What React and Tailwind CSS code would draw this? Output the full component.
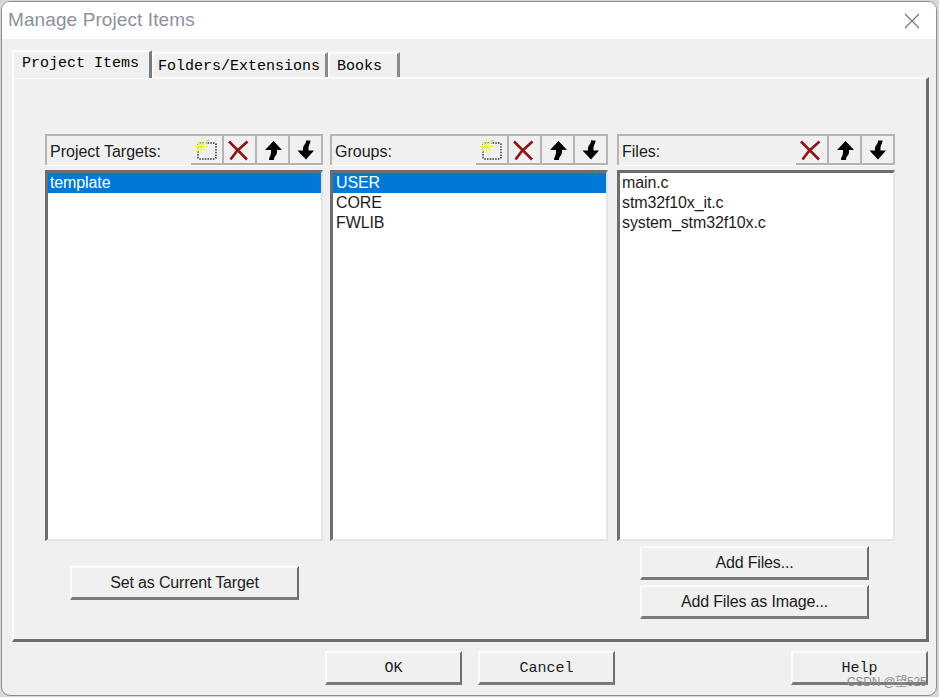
import React from 'react'

const sans = 'font-["Liberation_Sans",Arial,"Noto_Sans_CJK_SC",sans-serif]'
const mono = 'font-["Liberation_Mono","Courier_New",monospace]'

function NewIcon() {
  return (
    <svg width="24" height="24" viewBox="0 0 24 24" fill="none">
      <rect x="3" y="5" width="18" height="16" rx="1.5" stroke="#333" strokeWidth="1.4" strokeDasharray="1.5 1.2" />
      <path d="M0 8.500h13M6.500 2v13M2 4l9 9M11 4l-9 9" stroke="#f0f0f0" strokeWidth="2" />
      <path d="M0 8.500h13M6.500 2v13M2 4l9 9M11 4l-9 9" stroke="#f2ee2c" strokeWidth="1" />
      <path d="M11 3.500l3-1.500" stroke="#d9d34a" strokeWidth="1.300" />
    </svg>
  )
}

function DeleteIcon() {
  return (
    <svg width="24" height="24" viewBox="0 0 24 24" fill="none">
      <path d="M1 3.500l18 18M19.500 3.500L9 13l-6.500 8.500" stroke="#8f1515" strokeWidth="2.600" />
    </svg>
  )
}

function UpIcon() {
  return (
    <svg width="24" height="24" viewBox="0 0 24 24">
      <path d="M12.500 3L21 12h-5v2c0 2-1 3-2 4.500-.7 1-1 2-1 3.500H8c0-2 1-3.500 1.500-5 .5-1 .5-2 .5-5H4z" fill="#000" />
    </svg>
  )
}

function DownIcon() {
  return (
    <svg width="24" height="24" viewBox="0 0 24 24">
      <path d="M12 21.500L3.500 12.500h5.500v-2c0-2 1-3 2-4.500.7-1 1-2 1-3.500h4.500c0 2-1 3.500-1.500 5-.5 1-.5 2-.5 5h5.500z" fill="#000" />
    </svg>
  )
}

function ToolButton({ children }) {
  return (
    <button className="w-[33px] h-[29px] flex items-center justify-center bg-[#f0f0f0] border-r-2 border-b-2 border-[#b4b4b4]">
      {children}
    </button>
  )
}

function ListPanel({ title, items, selected, showNew, indent }) {
  return (
    <div className="w-[278px] flex flex-col">
      <div className="h-[31px] flex items-end justify-between border-t-2 border-l-2 border-[#b4b4b4] shadow-[0_1px_0_#fbfbfb]">
        <span className={`${sans} text-[16px] leading-[26px] text-[#1c1c1c] pl-[3px]`}>{title}</span>
        <div className="flex">
          {showNew && <ToolButton><NewIcon /></ToolButton>}
          <ToolButton><DeleteIcon /></ToolButton>
          <ToolButton><UpIcon /></ToolButton>
          <ToolButton><DownIcon /></ToolButton>
        </div>
      </div>
      <div className={`${sans} mt-[5px] h-[371px] bg-white border-t-[3px] border-l-[3px] border-[#6e6e6e] border-r-2 border-b-2 border-r-[#e4e4e4] border-b-[#e4e4e4] text-[16px] leading-[20px] text-[#1c1c1c] tracking-[-0.12px]`}>
        {items.map((item, i) => (
          <div key={item} className={`h-[20px] ${indent ? 'pl-[3px]' : 'pl-[2px]'} ${i === selected ? 'bg-[#0078d7] text-white' : ''}`}>
            {item}
          </div>
        ))}
      </div>
    </div>
  )
}

function DialogButton({ children, className }) {
  return (
    <button className={`h-[34px] bg-[#f0f0f0] border-t-2 border-l-2 border-t-[#fbfbfb] border-l-[#fbfbfb] border-r-2 border-b-[3px] border-r-[#6e6e6e] border-b-[#7a7a7a] text-[#1c1c1c] ${className}`}>
      {children}
    </button>
  )
}

export default function App() {
  return (
    <div className="w-[939px] h-[697px] bg-[#d5d7da] overflow-hidden relative">
      <div className="w-[936px] h-[695px] ml-[1px] mt-[1px] rounded-[9px] border border-[#8d8d8d] bg-[#f0f0f0] overflow-hidden flex flex-col">
        {/* title bar */}
        <div className="h-[37px] bg-white flex items-center justify-between pl-[6px] pr-[15px] shrink-0">
          <span className={`${sans} text-[19px] text-[#8b929b] tracking-[0.1px]`}>Manage Project Items</span>
          <svg width="18" height="18" viewBox="0 0 18 18" fill="none">
            <path d="M2 2l14 14M16 2L2 16" stroke="#777" strokeWidth="1.200" />
          </svg>
        </div>

        {/* tabs */}
        <div className="h-[38px] shrink-0 flex items-end pl-[10px]">
          <div className={`${mono} w-[140px] h-[28px] -mb-[1px] z-10 bg-[#f0f0f0] border-t-2 border-l-2 border-[#fbfbfb] border-r-[3px] border-r-[#7a7a7a] text-[15px] leading-[24px] pl-[8px] text-black rounded-t-[2px]`}>Project Items</div>
          <div className={`${mono} w-[176px] h-[25px] bg-[#f0f0f0] border-t-2 border-l-2 border-[#fbfbfb] border-r-[3px] border-r-[#8a8a8a] text-[15px] leading-[25px] pl-[4px] text-black`}>Folders/Extensions</div>
          <div className={`${mono} w-[72px] h-[25px] bg-[#f0f0f0] border-t-2 border-l-2 border-[#fbfbfb] border-r-[3px] border-r-[#8a8a8a] text-[15px] leading-[25px] pl-[7px] text-black`}>Books</div>
        </div>

        {/* tab page */}
        <div className="ml-[10px] w-[917px] h-[565px] shrink-0 border-t-2 border-l-2 border-t-[#fbfbfb] border-l-[#fbfbfb] border-r-[3px] border-b-[3px] border-r-[#6e6e6e] border-b-[#6e6e6e] pl-[31px] pt-[55px]">
          <div className="flex gap-[7px]">
            <ListPanel title="Project Targets:" items={['template']} selected={0} showNew />
            <ListPanel title="Groups:" items={['USER', 'CORE', 'FWLIB']} selected={0} showNew indent />
            <div className="ml-[2px]">
              <ListPanel title="Files:" items={['main.c', 'stm32f10x_it.c', 'system_stm32f10x.c']} selected={-1} />
            </div>
          </div>
          <div className={`${sans} flex justify-between text-[16px] tracking-[-0.15px]`}>
            <div className="pl-[25px] pt-[25px]">
              <DialogButton className="w-[229px]">Set as Current Target</DialogButton>
            </div>
            <div className="flex flex-col gap-[5px] pt-[5px] pr-[57px]">
              <DialogButton className="w-[229px]">Add Files...</DialogButton>
              <DialogButton className="w-[229px]">Add Files as Image...</DialogButton>
            </div>
          </div>
        </div>

        {/* bottom buttons */}
        <div className={`${mono} flex text-[15px] pt-[9px] pl-[323px]`}>
          <DialogButton className="w-[137px] pt-[3px]">OK</DialogButton>
          <DialogButton className="w-[137px] ml-[16px] pt-[3px]">Cancel</DialogButton>
          <DialogButton className="w-[137px] ml-[176px] pt-[3px]">Help</DialogButton>
        </div>
      </div>
      <span className={`${sans} absolute left-[847px] top-[675px] text-[12px] leading-[14px] text-[#8f8f8f] tracking-[-0.2px]`}>CSDN @望525</span>
    </div>
  )
}
